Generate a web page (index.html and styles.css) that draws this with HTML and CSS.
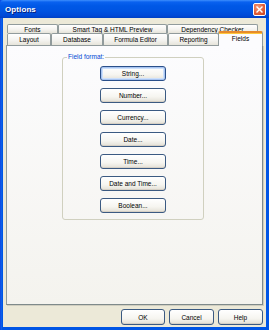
FILE: index.html
```html
<!DOCTYPE html>
<html>
<head>
<meta charset="utf-8">
<link rel="stylesheet" href="styles.css">
</head>
<body>
<div class="window">
  <div class="titlebar">
    <span class="title">Options</span>
    <span class="close"><svg width="7" height="7" viewBox="0 0 7 7"><path d="M1 1L6 6M6 1L1 6" stroke="#fff" stroke-width="1.4" stroke-linecap="square"/></svg></span>
  </div>
  <div class="client">
    <div class="tabrow back">
      <div class="tab t-fonts">Fonts</div>
      <div class="tab t-smart">Smart Tag &amp; HTML Preview</div>
      <div class="tab t-dep">Dependency Checker</div>
    </div>
    <div class="tabrow front">
      <div class="tab t-layout">Layout</div>
      <div class="tab t-db">Database</div>
      <div class="tab t-formula">Formula Editor</div>
      <div class="tab t-rep">Reporting</div>
      <div class="tab t-fields selected">Fields</div>
    </div>
    <div class="panel">
      <div class="group">
        <span class="legend">Field format:</span>
        <button class="btn default">String...</button>
        <button class="btn">Number...</button>
        <button class="btn">Currency...</button>
        <button class="btn">Date...</button>
        <button class="btn">Time...</button>
        <button class="btn">Date and Time...</button>
        <button class="btn">Boolean...</button>
      </div>
    </div>
    <div class="footer">
      <button class="btn fbtn">OK</button>
      <button class="btn fbtn">Cancel</button>
      <button class="btn fbtn">Help</button>
    </div>
  </div>
</div>
</body>
</html>
```
FILE: styles.css
```css
* { box-sizing: border-box; }
html, body { margin: 0; padding: 0; }
body {
  width: 269px;
  height: 330px;
  font-family: "Liberation Sans", Arial, sans-serif;
  font-size: 6.5px;
  color: #000;
  background: #0054e3;
}
.window {
  width: 269px;
  height: 330px;
  display: flex;
  flex-direction: column;
  background: linear-gradient(90deg, #0831d9 0, #166aee 1px, #0055e5 2px, #0055e5 100%);
  padding: 0 3px 3px 3px;
}
.titlebar {
  height: 18px;
  margin: 0 -3px;
  padding: 0 3px 0 5px;
  display: flex;
  align-items: center;
  justify-content: space-between;
  background: linear-gradient(#3d8ffd 0, #0a62f0 2px, #0058e6 6px, #0055e3 55%, #004ad8 85%, #0040c4 100%);
  border-radius: 4px 4px 0 0;
}
.title {
  color: #fff;
  font-weight: bold;
  font-size: 8px;
  text-shadow: 1px 1px 0 #0a1e7a;
  letter-spacing: 0.1px;
}
.close {
  width: 13px;
  height: 13px;
  border: 1px solid #fff;
  border-radius: 2px;
  background: radial-gradient(circle at 35% 30%, #f29a7c 0, #e2603a 55%, #c7401c 100%);
  display: flex;
  align-items: center;
  justify-content: center;
}
.close svg { display: block; }
.client {
  flex: 1;
  background: #ece9d8;
  padding: 6px 3px 2px 3px;
  display: flex;
  flex-direction: column;
}
.tabrow {
  display: flex;
  margin-left: 1px;
}
.tab {
  display: flex;
  align-items: center;
  justify-content: center;
  border: 1px solid #919b9c;
  border-bottom: none;
  border-radius: 2px 2px 0 0;
  background: linear-gradient(#ffffff, #f3f2ee 60%, #e6e4da);
  white-space: nowrap;
  margin-right: 0;
}
.back .tab { height: 9px; padding-top: 1px; }
.front .tab { height: 12px; }
.t-fonts { width: 51px; }
.t-smart { width: 109px; }
.t-dep { width: 91px; }
.t-layout { width: 44px; }
.t-db { width: 52px; }
.t-formula { width: 65px; }
.t-rep { width: 51px; }
.t-fields { width: 44px; }
.front .tab.selected {
  position: relative;
  z-index: 2;
  height: 15px;
  margin-top: -2px;
  margin-bottom: -1px;
  margin-left: -1px;
  width: 45px;
  padding-bottom: 2px;
  background: #fcfcfe;
  border-top: 2px solid #e68b2c;
  box-shadow: inset 0 1px 0 #ffc83c;
}
.panel {
  height: 260px;
  width: 257px;
  border: 1px solid #919b9c;
  border-right-color: #7f8a8b;
  border-bottom-color: #7f8a8b;
  background: linear-gradient(#fcfcfe, #f4f3ee);
  box-shadow: 1px 1px 0 #d0cec0;
  padding: 11px 0 0 55px;
  position: relative;
  z-index: 1;
}
.group {
  position: relative;
  width: 142px;
  height: 163px;
  border: 1px solid #d0d0bf;
  border-radius: 3px;
  padding: 8px 0 6px 0;
  display: flex;
  flex-direction: column;
  align-items: center;
  gap: 7px;
}
.legend {
  position: absolute;
  left: 4px;
  top: -5px;
  padding: 0 1px;
  background: #fbfbfc;
  color: #0046d5;
  line-height: 8px;
}
.btn {
  font-family: "Liberation Sans", Arial, sans-serif;
  font-size: 6.5px;
  color: #000;
  width: 66px;
  height: 15px;
  padding: 0;
  margin: 0;
  border: 1px solid #3b5a82;
  border-radius: 3px;
  background: linear-gradient(#ffffff, #f6f5f0 60%, #e8e5dc 90%, #d6d0c5);
  box-shadow: inset 0 -1px 0 #d6d0c5;
  flex: none;
}
.btn.default {
  box-shadow: inset 0 0 0 1px #a8c4f0, inset 0 0 0 2px #cde0fb;
  border-color: #2a4f8a;
}
.footer {
  margin-top: 4px;
  display: flex;
  justify-content: flex-end;
  gap: 4px;
}
.fbtn { height: 16px; width: 45px; }
.fbtn:first-child { width: 44px; }
```
